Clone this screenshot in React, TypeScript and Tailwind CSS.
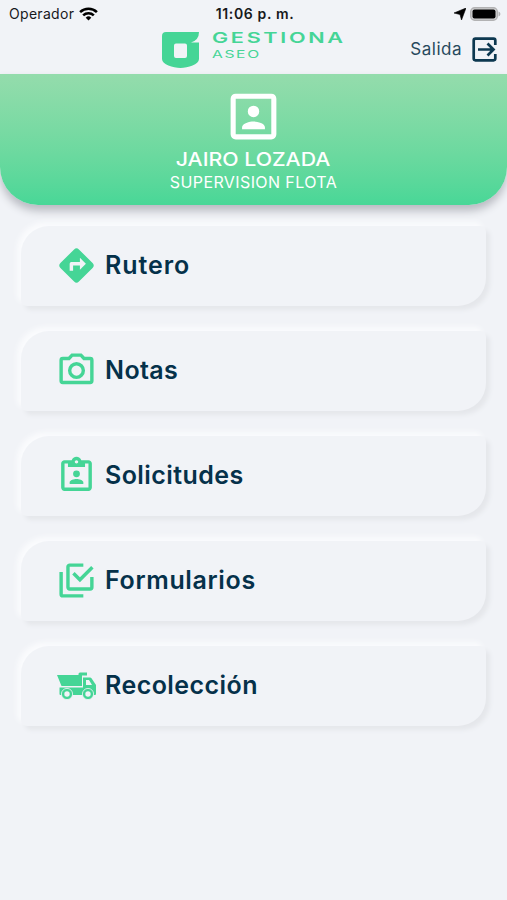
import type { ReactNode } from "react";

const icons = {
  directions:
    "M21.41 10.59L13.42 2.59A2 2 0 0 0 10.59 2.59L2.59 10.59A2 2 0 0 0 2.59 13.41L10.59 21.41A2 2 0 0 0 13.42 21.41L21.41 13.41A2 2 0 0 0 21.41 10.59M14 14.5V12H10V15H8V11A1 1 0 0 1 9 10H14V7.5L17.5 11Z",
  camera:
    "M20 4H16.83L15 2H9L7.17 4H4A2 2 0 0 0 2 6V18A2 2 0 0 0 4 20H20A2 2 0 0 0 22 18V6A2 2 0 0 0 20 4M20 18H4V6H8.05L9.88 4H14.12L15.95 6H20V18M12 7A5 5 0 0 0 7 12A5 5 0 0 0 12 17A5 5 0 0 0 17 12A5 5 0 0 0 12 7M12 15A3 3 0 0 1 9 12A3 3 0 0 1 12 9A3 3 0 0 1 15 12A3 3 0 0 1 12 15Z",
  clipboard:
    "M19 3H14.82C14.4 1.84 13.3 1 12 1S9.6 1.84 9.18 3H5C3.9 3 3 3.9 3 5V19C3 20.1 3.9 21 5 21H19C20.1 21 21 20.1 21 19V5C21 3.9 20.1 3 19 3M12 3C12.55 3 13 3.45 13 4S12.55 5 12 5 11 4.55 11 4 11.45 3 12 3M7 7H17V5H19V19H5V5H7V7M12 9A2 2 0 0 0 12 13A2 2 0 0 0 12 9M8 17V16C8 14.67 10.67 14 12 14S16 14.67 16 16V17H8Z",
  forms:
    "M20 16V10H22V16A2 2 0 0 1 20 18H8C6.89 18 6 17.1 6 16V4C6 2.89 6.89 2 8 2H16V4H8V16H20M10.91 7.08L14 10.17L20.59 3.58L22 5L14 13L9.5 8.5L10.91 7.08M16 20V22H4A2 2 0 0 1 2 20V7H4V20H16Z",
  profile:
    "M19 19H5V5H19M19 3H5A2 2 0 0 0 3 5V19A2 2 0 0 0 5 21H19A2 2 0 0 0 21 19V5A2 2 0 0 0 19 3M16.5 16.25C16.5 14.75 13.5 14 12 14S7.5 14.75 7.5 16.25V17H16.5M12 12.25A2.25 2.25 0 0 0 12 7.75A2.25 2.25 0 0 0 12 12.25Z",
};

function Icon({ path, className }: { path: string; className: string }) {
  return (
    <svg viewBox="0 0 24 24" className={className} fill="currentColor" fillRule="evenodd">
      <path d={path} />
    </svg>
  );
}

function DumpTruck() {
  return (
    <svg viewBox="0 0 40 28" className="mt-px h-7 w-10 shrink-0" fill="currentColor">
      <path d="M0 3h21.500V2q0-1.500 1.500-1.500h7v3h-5V14H4.500Z" />
      <path
        fillRule="evenodd"
        d="M2.500 15.500H26V5.500h7q1 0 1.500.8l3.500 5.200q1 1 1 2V22q0 1-1 1H3.500q-1 0-1-1ZM29 8v5h6l-3-5Z"
      />
      <g stroke="#f1f3f7" strokeWidth=".8">
        <circle cx="10" cy="22" r="5.600" />
        <circle cx="31" cy="22" r="5.600" />
      </g>
      <circle cx="10" cy="22" r="2.700" fill="#f1f3f7" />
      <circle cx="31" cy="22" r="2.700" fill="#f1f3f7" />
    </svg>
  );
}

const menu: { label: string; icon: ReactNode; text: string }[] = [
  { label: "Rutero", icon: <Icon path={icons.directions} className="size-[41px]" />, text: "tracking-[0.95px]" },
  { label: "Notas", icon: <Icon path={icons.camera} className="size-[41px]" />, text: "tracking-[0.4px]" },
  { label: "Solicitudes", icon: <Icon path={icons.clipboard} className="size-[41px]" />, text: "tracking-[0.42px]" },
  { label: "Formularios", icon: <Icon path={icons.forms} className="size-[41px]" />, text: "tracking-[0.65px]" },
  { label: "Recolección", icon: <DumpTruck />, text: "tracking-[0.45px]" },
];

function StatusBar() {
  return (
    <div className="grid h-7 grid-cols-3 items-center pr-[6px] pl-[9px] text-sm text-[#17191c]">
      <div className="flex items-center gap-[5px]">
        <span className="tracking-[0.3px]">Operador</span>
        <svg viewBox="0 0 20 15" className="h-[14px] w-[19px]" fill="none" stroke="#000" strokeWidth="2.800">
          <path d="M1 5.500a13 13 0 0 1 18 0M4.300 9a8.300 8.300 0 0 1 11.400 0" />
          <path d="m7 11.500 3 3 3-3a4.300 4.300 0 0 0-6 0Z" fill="#000" stroke="none" />
        </svg>
      </div>
      <div className="text-center font-semibold tracking-[0.65px] whitespace-nowrap">11:06 p. m.</div>
      <div className="flex items-center justify-end gap-1">
        <svg viewBox="0 0 12 12" className="size-3">
          <path d="M12 0 7.500 12 6 6.500 0 5Z" stroke="#000" strokeWidth=".6" strokeLinejoin="round" />
        </svg>
        <svg viewBox="0 0 31 14" className="h-3.5 w-[31px]">
          <rect x=".7" y=".7" width="26.600" height="12.600" rx="4" fill="#d2d2d3" stroke="#b2b2b3" strokeWidth="1.400" />
          <rect x="2.500" y="2.500" width="23" height="9" rx="2" />
          <path d="M28.500 4.500c2.500 1 2.500 4 0 5Z" fill="#b2b2b3" />
        </svg>
      </div>
    </div>
  );
}

export default function App() {
  return (
    <div className="min-h-screen bg-[#f1f3f7] font-['Inter',sans-serif]">
      <StatusBar />
      <header className="flex h-[46px] items-start justify-between pr-[10px] pl-[162px]">
        <div className="flex gap-[13px] pt-[3px] text-[#45d596]">
          <svg viewBox="0 0 37 37" className="size-[37px]" fill="currentColor" fillRule="evenodd">
            <path d="M4 1h33q0 8-8 10.500h8V28c0 5.500-11 9-18.500 9S0 33.500 0 28V5q0-4 4-4m10 11.500q-2 0-2 2V25q0 2 2 2h9q2 0 2-2V14.500q0-2-2-2Z" />
          </svg>
          <div className="w-[133px] whitespace-nowrap">
            <div className="h-[15px] origin-left scale-x-[1.490] text-[14.500px] leading-[14px] font-semibold tracking-[1.800px]">
              GESTIONA
            </div>
            <div className="mt-0.5 origin-left scale-x-[1.490] text-[10.500px] leading-[13px] tracking-[1.100px]">
              ASEO
            </div>
          </div>
        </div>
        <button className="flex items-center gap-[10px] pt-[9px] text-[17px] text-[#27495d]">
          <span className="tracking-[0.5px]">Salida</span>
          <svg viewBox="0 0 25 25" className="size-[25px]" fill="none" stroke="#0d3850" strokeWidth="2.700">
            <path d="M23.300 8V3.400q0-1.700-1.700-1.700H3.400q-1.700 0-1.700 1.700v18.200q0 1.700 1.700 1.700h18.200q1.700 0 1.700-1.700V17M6 12.500h15.500M15.500 6.500l6 6-6 6" />
          </svg>
        </button>
      </header>

      <section className="flex h-[131px] flex-col items-center rounded-b-[38px] bg-linear-to-b from-[#94dcac] to-[#48d797] pt-3 text-white shadow-[0_6px_8px_0_#b9bbc2]">
        <Icon path={icons.profile} className="size-[61px]" />
        <h1 className="mt-px text-[19px] leading-6 font-medium">
          <span className="inline-block scale-x-[1.120]">JAIRO LOZADA</span>
        </h1>
        <p className="-mt-px text-base leading-[22px] tracking-[0.4px]">SUPERVISION FLOTA</p>
      </section>

      <main className="flex flex-col gap-[25px] px-[21px] pt-[21px]">
        {menu.map((item) => (
          <button
            key={item.label}
            className="flex h-20 items-center rounded-tl-[28px] rounded-tr-md rounded-br-[28px] rounded-bl-md bg-[#f1f3f7] pl-[35px] text-left text-[#05314a] shadow-[4px_4px_4px_#e5e7eb,-4px_-4px_5px_#fafbfd]"
          >
            <span className="-mt-0.5 flex w-[41px] justify-center text-[#45d596]">{item.icon}</span>
            <span className={`pl-2 text-[25px] font-semibold ${item.text}`}>{item.label}</span>
          </button>
        ))}
      </main>
    </div>
  );
}
